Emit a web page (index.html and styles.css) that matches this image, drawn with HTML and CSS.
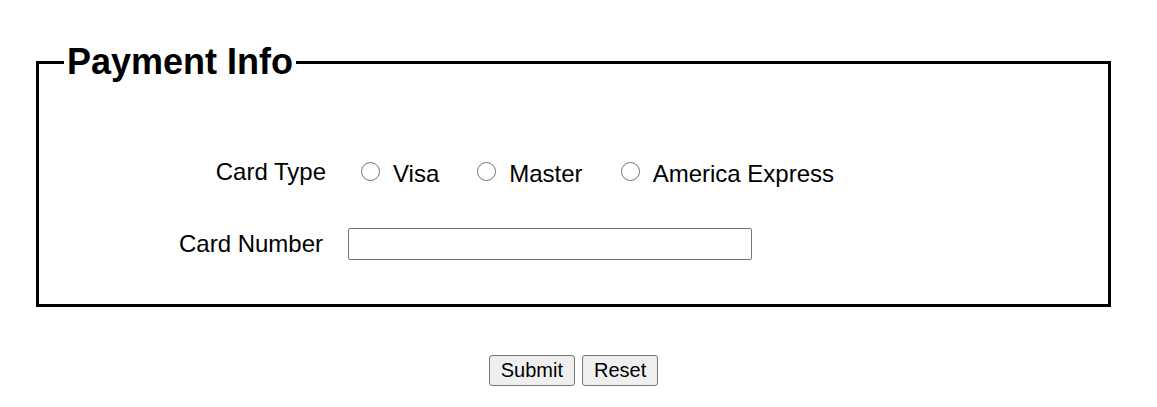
FILE: index.html
```html
<!DOCTYPE html>
<html lang="en">
<head>
<meta charset="utf-8">
<title>Payment Info</title>
<link rel="stylesheet" href="styles.css">
</head>
<body>
<form class="payment-form">
  <fieldset class="panel">
    <legend class="panel-title">Payment Info</legend>
    <div class="row row-type">
      <span class="row-label">Card Type</span>
      <label class="option"><input type="radio" name="card" class="radio"><span>Visa</span></label>
      <label class="option"><input type="radio" name="card" class="radio"><span>Master</span></label>
      <label class="option"><input type="radio" name="card" class="radio"><span>America Express</span></label>
    </div>
    <div class="row row-number">
      <label class="row-label label-number" for="cardnum">Card Number</label>
      <input type="text" id="cardnum" class="text-input">
    </div>
  </fieldset>
  <div class="actions">
    <button type="submit" class="btn">Submit</button>
    <button type="reset" class="btn">Reset</button>
  </div>
</form>
</body>
</html>
```

FILE: styles.css
```css
html, body {
  margin: 0;
  padding: 0;
  background: #ffffff;
}

body {
  font-family: "Liberation Sans", Arial, sans-serif;
  font-size: 24px;
  color: #000000;
}

.payment-form {
  padding-top: 41px;
}

.panel {
  margin: 0 46px 0 36px;
  border: 3px solid #000000;
  padding: 75px 18px 44px 25px;
  min-width: 0;
}

.panel-title {
  font-size: 36px;
  font-weight: bold;
  padding: 0 3px;
}

.row {
  display: flex;
  align-items: center;
}

.row-label {
  width: 262px;
  text-align: right;
  flex: none;
}

.row-type {
  height: 28px;
}

.row-type .row-label {
  margin-right: 35px;
}

.option {
  display: flex;
  align-items: center;
  gap: 13px;
  margin-right: 38px;
  position: relative;
  top: 2px;
}

.radio {
  appearance: none;
  -webkit-appearance: none;
  width: 19px;
  height: 19px;
  margin: 0;
  border: 1.5px solid #767676;
  border-radius: 50%;
  background: #ffffff;
  box-sizing: border-box;
  position: relative;
  top: -3px;
}

.row-number {
  margin-top: 42px;
}

.label-number {
  width: 259px;
  margin-right: 25px;
}

.text-input {
  width: 404px;
  height: 32px;
  box-sizing: border-box;
  border: 1px solid #767676;
  border-radius: 2px;
  margin: 0;
  padding: 2px 4px;
  font-family: "Liberation Sans", Arial, sans-serif;
  font-size: 20px;
}

.actions {
  display: flex;
  justify-content: center;
  gap: 7px;
  margin-top: 48px;
  padding-right: 10px;
}

.btn {
  font-family: "Liberation Sans", Arial, sans-serif;
  font-size: 20px;
  line-height: 23px;
  padding: 3px 11px;
  margin: 0;
  border: 1px solid #767676;
  border-radius: 3px;
  background: #efefef;
  color: #000000;
}
```
